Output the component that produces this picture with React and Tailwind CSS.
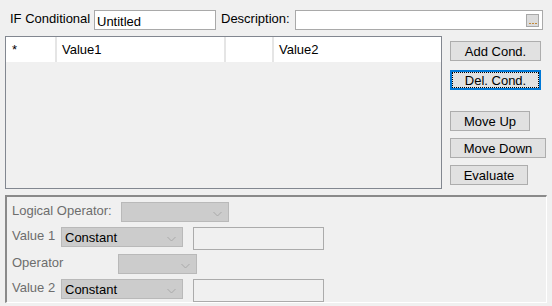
import React from "react";

function Btn({ w, children, focused }) {
  return (
    <div
      className={`relative h-[20px] flex items-center justify-center bg-[#e1e1e1] ${focused ? "border-2 border-[#0078d7]" : "border border-[#adadad]"}`}
      style={{ width: w }}
    >
      {focused && <div className="absolute inset-0 border border-dotted border-black" />}
      <span className="leading-none text-black">{children}</span>
    </div>
  );
}

function Chevron() {
  return (
    <svg width="9" height="6" viewBox="0 0 9 6" className="absolute right-[6px] top-[8px]">
      <polyline points="0.5,1 4.5,5 8.5,1" fill="none" stroke="#a9a9a9" strokeWidth="1" />
    </svg>
  );
}

function Combo({ w, text }) {
  return (
    <div
      className="relative h-[20px] bg-[#cccccc] border border-[#b9b9b9] flex items-center pl-[3px]"
      style={{ width: w }}
    >
      {text && <span className="text-black leading-none">{text}</span>}
      <Chevron />
    </div>
  );
}

export default function App() {
  return (
    <div
      className="w-[552px] h-[306px] bg-[#f0f0f0] overflow-hidden text-[13px] text-black"
      style={{ fontFamily: '"Liberation Sans", Arial, sans-serif' }}
    >
      {/* top row */}
      <div className="flex items-center pt-[10px] pl-[10px] h-[20px] box-content">
        <div className="w-[84px] leading-none -mt-[4px]">IF Conditional</div>
        <div className="w-[122px] h-[20px] bg-white border border-[#a9a9a9] flex items-center pl-[2px] leading-none pt-[2px]">
          Untitled
        </div>
        <div className="ml-[5px] w-[74px] leading-none -mt-[4px]">Description:</div>
        <div className="relative w-[248px] h-[20px] bg-white border border-[#a9a9a9]">
          <div className="absolute right-[3px] top-[3px] w-[13px] h-[13px] bg-[#dcdcdc] border border-[#a8a8a8] flex items-end justify-center gap-[1px] pb-[2px]">
            <span className="w-[2px] h-[1px] bg-[#c28a3c]" />
            <span className="w-[2px] h-[1px] bg-[#c28a3c]" />
            <span className="w-[2px] h-[1px] bg-[#c28a3c]" />
          </div>
        </div>
      </div>

      {/* middle */}
      <div className="flex mt-[6px]">
        <div className="ml-[5px] w-[437px] h-[153px] border border-[#828790] bg-[#f0f0f0]">
          <div className="flex h-[25px] bg-white">
            <div className="w-[49px] flex items-center pl-[6px] leading-none">*</div>
            <div className="w-[2px] bg-[#e5e5e5]" />
            <div className="w-[167px] flex items-center pl-[5px] leading-none">Value1</div>
            <div className="w-[2px] bg-[#e5e5e5]" />
            <div className="w-[46px]" />
            <div className="w-[2px] bg-[#e5e5e5]" />
            <div className="w-[165px] flex items-center pl-[5px] leading-none">Value2</div>
          </div>
        </div>
        <div className="ml-[8px] flex flex-col pt-[5px]">
          <Btn w={91}>Add Cond.</Btn>
          <div className="mt-[9px]">
            <Btn w={91} focused>Del. Cond.</Btn>
          </div>
          <div className="mt-[21px]">
            <Btn w={80}>Move Up</Btn>
          </div>
          <div className="mt-[7px]">
            <Btn w={96}>Move Down</Btn>
          </div>
          <div className="mt-[7px]">
            <Btn w={78}>Evaluate</Btn>
          </div>
        </div>
      </div>

      {/* bottom panel */}
      <div className="ml-[5px] mt-[6px] w-[542px] h-[108px] border-t-2 border-l-2 border-r border-b border-t-[#8a8a8a] border-l-[#8a8a8a] border-r-white border-b-white pl-[5px] pt-[5px] text-[#6d6d6d]">
        <div className="flex items-center h-[20px]">
          <div className="w-[109px] leading-none -mt-[4px]">Logical Operator:</div>
          <Combo w={108} />
        </div>
        <div className="flex items-start h-[23px] mt-[5px]">
          <div className="w-[49px] leading-none mt-[2px]">Value 1</div>
          <Combo w={122} text="Constant" />
          <div className="ml-[10px] w-[131px] h-[23px] border border-[#ababab]" />
        </div>
        <div className="flex items-center h-[20px] mt-[4px]">
          <div className="w-[106px] leading-none -mt-[4px]">Operator</div>
          <Combo w={79} />
        </div>
        <div className="flex items-start h-[23px] mt-[5px]">
          <div className="w-[49px] leading-none mt-[2px]">Value 2</div>
          <Combo w={122} text="Constant" />
          <div className="ml-[10px] w-[131px] h-[23px] border border-[#ababab]" />
        </div>
      </div>
    </div>
  );
}
